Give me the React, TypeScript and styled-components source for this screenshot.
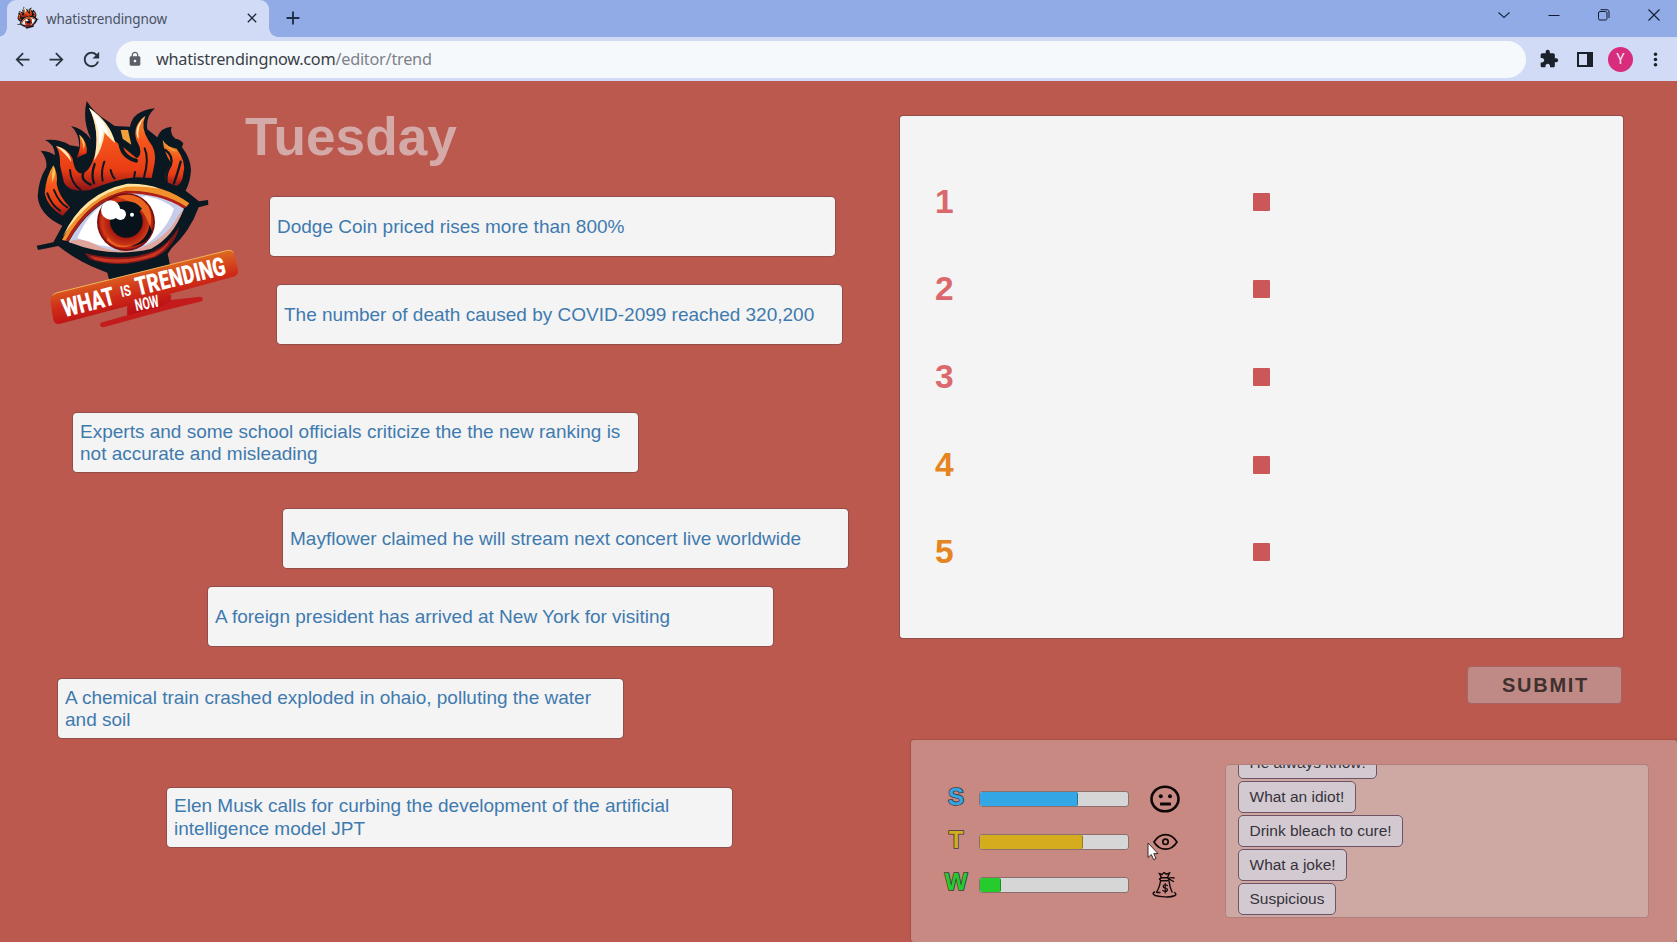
import React from "react";
import styled, { createGlobalStyle } from "styled-components";
import {
  MdAdd,
  MdArrowBack,
  MdArrowForward,
  MdClose,
  MdExtension,
  MdLock,
  MdMoreVert,
  MdRefresh,
} from "react-icons/md";

const GlobalStyle = createGlobalStyle`
  * { box-sizing: border-box; }
  html, body { margin: 0; padding: 0; }
  body {
    width: 1677px;
    height: 942px;
    overflow: hidden;
    font-family: "Liberation Sans", Arial, sans-serif;
  }
`;

const Window = styled.div`
  display: flex;
  flex-direction: column;
  width: 1677px;
  height: 942px;
  overflow: hidden;
  background: #bc594e;
`;

/* ---------- browser chrome ---------- */

const TabStrip = styled.div`
  display: flex;
  flex: none;
  height: 37px;
  padding-left: 7px;
  background: #91abe6;
`;

const Tab = styled.div`
  position: relative;
  display: flex;
  align-items: center;
  width: 262px;
  height: 37px;
  padding: 0 9px 2px 10px;
  border-radius: 9px 9px 0 0;
  background: #d1dbf5;

  &::before,
  &::after {
    content: "";
    position: absolute;
    bottom: 0;
    width: 9px;
    height: 9px;
  }
  &::before {
    left: -9px;
    background: radial-gradient(circle at 0 0, transparent 8.5px, #d1dbf5 9px);
  }
  &::after {
    right: -9px;
    background: radial-gradient(circle at 100% 0, transparent 8.5px, #d1dbf5 9px);
  }
`;

const TabTitle = styled.span`
  flex: 1;
  padding: 3px 0 0 7px;
  color: #4a5263;
  font: 13.5px/20px "Noto Sans", sans-serif;
  letter-spacing: -0.1px;
`;

const NewTab = styled.div`
  display: flex;
  align-items: center;
  padding: 0 0 2px 13px;
  color: #1f2a44;
`;

const WindowControls = styled.div`
  display: flex;
  align-items: center;
  gap: 36px;
  margin-left: auto;
  padding: 0 16px 7px 0;
`;

const Toolbar = styled.div`
  display: flex;
  flex: none;
  align-items: center;
  height: 44px;
  padding-left: 12px;
  background: #d1dbf5;
  color: #2b3340;

  svg {
    flex: none;
  }
`;

const NavButtons = styled.div`
  display: flex;
  align-items: center;
  gap: 13px;
  width: 104px;
`;

const AddressBar = styled.div`
  display: flex;
  align-items: center;
  width: 1410px;
  height: 37px;
  padding-left: 11px;
  border-radius: 19px;
  background: #f6f9fc;
  color: #5b6068;
`;

const Url = styled.span`
  padding-left: 13px;
  color: #3a3f47;
  font: 16.3px/24px "Noto Sans", sans-serif;
  letter-spacing: -0.25px;
`;

const UrlPath = styled.span`
  color: #7d828a;
`;

const ToolbarActions = styled.div`
  display: flex;
  align-items: center;
  margin-left: 13px;
  color: #1b212b;
`;

const SidePanelIcon = styled.div`
  width: 16px;
  height: 15px;
  margin-left: 18px;
  border: 2px solid #1b212b;
  border-right-width: 6px;
`;

const Avatar = styled.div`
  display: grid;
  place-items: center;
  width: 25px;
  height: 25px;
  margin: 0 12px 0 15px;
  border-radius: 50%;
  background: #d72d7c;
  color: #fbe3ee;
  font: 14px/1 Roboto, sans-serif;
  flex: none;
`;

/* ---------- page ---------- */

const Page = styled.main`
  position: relative;
  display: flex;
  flex: 1;
  min-height: 0;
`;

const Feed = styled.section`
  display: flex;
  align-items: flex-start;
  width: 899px;
  padding: 9px 0 0 20px;
`;

const Weekday = styled.h1`
  margin: 16px 0 0 -15px;
  color: #d3aaa8;
  font-size: 53.2px;
  font-weight: 700;
  line-height: 62px;
`;

const Headline = styled.div<{ $x: number; $y: number }>`
  position: absolute;
  left: ${(p) => p.$x}px;
  top: ${(p) => p.$y}px;
  display: flex;
  align-items: center;
  width: 565px;
  height: 59px;
  padding: 1px 10px 0 7px;
  border-radius: 4px;
  background: #f4f4f4;
  box-shadow: 0 0 0 1px rgba(80, 60, 70, 0.4);
  color: #3f7aae;
  font-size: 19px;
  line-height: 22.3px;
`;

const Desk = styled.section`
  display: flex;
  flex-direction: column;
  width: 778px;
  padding-top: 35px;
`;

const RankBoard = styled.ol`
  display: flex;
  flex-direction: column;
  flex: none;
  width: 723px;
  height: 522px;
  margin: 0 0 0 1px;
  padding: 42px 35px 0;
  border-radius: 3px;
  background: #f4f4f4;
  box-shadow: 0 0 0 1px rgba(80, 60, 70, 0.4);
  list-style: none;
`;

const RankRow = styled.li`
  display: flex;
  align-items: center;
  height: 87.6px;
`;

const RankNumber = styled.span<{ $minor: boolean }>`
  width: 318px;
  padding-bottom: 1px;
  color: ${(p) => (p.$minor ? "#e58522" : "#da686c")};
  font-size: 33.5px;
  font-weight: 700;
  line-height: 39px;
`;

const Slot = styled.span`
  width: 17px;
  height: 18px;
  border-radius: 1px;
  background: #cb5759;
`;

const SubmitButton = styled.button`
  flex: none;
  width: 155px;
  height: 38px;
  margin: 28px 0 0 568px;
  padding: 0 0 0 2px;
  border: 1px solid #a66560;
  border-radius: 4px;
  background: #bf8a86;
  color: #40312f;
  font: 700 20px/36px "Liberation Sans", Arial, sans-serif;
  letter-spacing: 1.7px;
`;

const StatusPanel = styled.section`
  display: flex;
  flex: none;
  width: 766px;
  height: 202px;
  margin: 36px 0 0 12px;
  border-radius: 3px;
  background: #c88983;
  box-shadow: 0 0 0 1px rgba(120, 60, 60, 0.35);
`;

const Meters = styled.div`
  display: flex;
  flex-direction: column;
  width: 314px;
  padding: 38px 0 0 30px;
`;

const MeterRow = styled.div`
  display: flex;
  align-items: center;
  height: 42.7px;
`;

const MeterLetter = styled.span<{ $color: string }>`
  width: 30px;
  padding-bottom: 5px;
  color: ${(p) => p.$color};
  font-size: 24px;
  font-weight: 700;
  line-height: 28px;
  text-align: center;
  -webkit-text-stroke: 1.6px #3c3a38;
  paint-order: stroke fill;
`;

const MeterTrack = styled.div`
  width: 150px;
  height: 16px;
  margin: 0 21px 0 8px;
  overflow: hidden;
  border: 1px solid #8b6f6c;
  border-radius: 3px;
  background: #d6d6d6;
`;

const MeterFill = styled.div<{ $color: string; $width: number }>`
  width: ${(p) => p.$width}px;
  height: 14px;
  border-right: 1px solid rgba(0, 0, 0, 0.3);
  border-radius: 2px;
  background: ${(p) => p.$color};
`;

const Comments = styled.div`
  display: flex;
  flex-direction: column;
  align-items: flex-start;
  justify-content: flex-end;
  gap: 2px;
  width: 424px;
  height: 154px;
  margin-top: 24px;
  padding: 0 0 2px 12px;
  overflow: hidden;
  border: 1px solid #b08080;
  border-radius: 4px;
  background: #cea8a2;
`;

const Bubble = styled.div`
  flex: none;
  height: 32px;
  padding: 0 10.5px;
  border: 1px solid #6d5364;
  border-radius: 5px;
  background: #d2cad0;
  color: #37323c;
  font-size: 15.5px;
  line-height: 30px;
  white-space: nowrap;
`;

const Pointer = styled.svg`
  position: absolute;
  left: 1147px;
  top: 761px;
`;

/* ---------- drawings ---------- */

function FlamingEye({ id }: { id: string }) {
  return (
    <g>
      <defs>
        <linearGradient id={`${id}-fire`} x1="0" y1="0" x2="0" y2="1">
          <stop offset="0" stopColor="#f79a2c" />
          <stop offset="0.4" stopColor="#f4551c" />
          <stop offset="0.75" stopColor="#e93c14" />
          <stop offset="1" stopColor="#8c1418" />
        </linearGradient>
        <radialGradient id={`${id}-iris`} cx="0.5" cy="0.5" r="0.5">
          <stop offset="0" stopColor="#8c1210" />
          <stop offset="0.6" stopColor="#a81a10" />
          <stop offset="0.88" stopColor="#d03a16" />
          <stop offset="1" stopColor="#a81810" />
        </radialGradient>
      </defs>
      <path
        fill="#0a1822"
        d="M200 33 Q225 72 262 92 L284 108 L330 110 Q338 62 405 55 Q376 80 382 118 L412 142 Q422 112 455 110 Q448 130 466 146 Q482 148 490 160 L486 172 Q512 205 513 240 Q511 275 497 302 L537 334 L564 330 L565 344 L536 352 Q510 425 455 474 L443 492 L450 525 L268 572 L262 548 L236 538 Q170 512 115 468 L54 480 L50 467 L100 457 L127 407 Q58 375 53 320 Q55 270 79 232 Q82 205 62 182 Q92 184 105 196 Q104 162 75 150 Q120 146 150 166 L178 170 Q178 130 153 108 Q190 115 213 148 Q186 92 200 33Z"
      />
      <g fill={`url(#${id}-fire)`}>
        <path d="M208 54 Q256 96 280 150 Q320 178 350 205 Q372 190 350 152 Q335 108 376 78 Q360 112 386 152 Q410 180 404 218 L395 264 L350 262 Q290 266 210 300 Q150 310 132 278 L120 225 Q122 190 108 168 Q145 176 158 206 Q164 250 185 250 Q210 248 226 190 Q240 130 208 54Z" />
        <path d="M100 226 Q114 250 110 282 Q116 318 150 352 L128 378 Q82 350 74 310 Q78 260 100 226Z" />
        <path d="M428 150 Q440 172 470 176 Q500 215 490 250 Q488 280 470 288 L438 276 Q430 250 454 220 Q432 190 428 150Z" />
        <path d="M178 134 Q205 158 200 190 L170 204 Q186 170 178 134Z" />
        <path fill="#f0a13a" d="M302 120 H324 L334 164 L308 146Z" />
      </g>
      <g fill="#ffe9b8">
        <path d="M207 53 Q272 98 286 160 Q262 138 254 128 Q248 175 222 212 Q242 120 207 53Z" />
        <path d="M376 77 Q350 108 356 148 Q336 116 376 77Z" />
        <path d="M108 168 Q148 178 154 216 Q136 190 108 168Z" />
        <path fill="#f7c560" d="M178 134 Q202 154 190 178 Q190 156 178 134Z" />
        <path fill="#f9c052" d="M430 152 Q444 176 472 184 Q450 186 430 152Z" />
        <path fill="#f9c052" d="M101 228 Q112 250 96 276 Q94 250 101 228Z" />
      </g>
      <path fill="#ffffff" d="M208 55 Q258 96 268 140 L250 120 Q246 150 238 166 Q242 110 208 55Z" />
      <g fill="none" stroke="#0a1822" strokeLinecap="round">
        <path strokeWidth="6" d="M253 215 Q242 245 248 272 M272 240 Q276 258 284 266 M374 175 Q388 206 372 262 M345 246 L342 264" />
        <path strokeWidth="6" d="M150 240 Q152 278 182 300 M102 300 Q118 340 142 352 M82 310 Q94 345 120 362" />
        <path strokeWidth="7" d="M436 180 Q462 198 452 226 Q436 250 440 276 M482 215 Q474 246 462 280" />
        <path strokeWidth="12" d="M300 150 Q302 200 348 212" />
        <path strokeWidth="7" d="M190 248 Q180 270 212 284 M224 222 Q212 256 222 280" />
      </g>

      <path fill="#0a1822" d="M108 460 Q190 290 330 268 Q450 272 536 340 Q480 460 400 492 Q250 530 108 460Z" />
      <path fill="#f0912c" d="M126 450 Q190 312 322 282 Q430 282 508 340 L498 352 Q410 300 320 304 Q210 320 138 452Z" />
      <path fill="#ffe3a0" d="M128 440 Q188 308 322 281 Q380 280 420 296 Q370 288 320 290 Q210 312 128 440Z" />
      <path fill="#b02018" d="M136 452 Q206 326 316 302 Q420 300 500 350 L490 356 Q410 312 316 312 Q214 332 146 454Z" />
      <path fill="#c6cdea" d="M146 456 Q210 340 316 310 Q420 310 492 356 Q456 440 392 474 Q290 500 146 456Z" />
      <path fill="#ffffff" d="M172 444 Q206 366 262 336 L380 318 Q440 332 462 356 Q440 420 380 462 Q270 488 172 444Z" />
      <path fill="#e0a59c" d="M146 456 Q180 436 238 470 Q280 486 340 482 Q440 450 474 378 L490 358 Q462 440 394 476 Q270 506 146 456Z" />
      <circle cx="318" cy="396" r="87" fill="#7a1010" />
      <circle cx="318" cy="396" r="82" fill={`url(#${id}-iris)`} />
      <path fill="#e8641f" d="M290 320 Q350 300 386 350 Q398 380 390 410 Q370 340 290 320Z" />
      <path fill="#e8641f" d="M262 440 Q290 476 336 464 Q300 484 262 452Z" />
      <circle cx="319" cy="394" r="49" fill="#07121a" />
      <path fill="#07121a" d="M284 340 Q340 322 366 356 L350 372 L290 360Z M330 470 Q384 452 388 404 L396 424 Q384 464 330 470Z" />
      <circle cx="272" cy="360" r="29" fill="#ffffff" />
      <circle cx="301" cy="373" r="17" fill="#ffffff" />
      <circle cx="336" cy="374" r="6" fill="#ffffff" />
      <path fill="#7f171b" d="M194 490 Q320 516 400 484 Q444 464 478 410 Q464 470 410 500 Q300 540 210 508Z" />
      <path fill="#cb3620" d="M208 497 Q320 522 398 490 Q430 478 452 448 Q436 484 400 500 Q300 530 226 510Z" />
    </g>
  );
}

function BrandLogo() {
  return (
    <svg width="240" height="250" viewBox="0 0 720 750" role="img" aria-label="What is trending now">
      <defs>
        <linearGradient id="banner" gradientUnits="userSpaceOnUse" x1="360" y1="540" x2="385" y2="665">
          <stop offset="0" stopColor="#dd6420" />
          <stop offset="0.5" stopColor="#cf2c18" />
          <stop offset="1" stopColor="#ba0c14" />
        </linearGradient>
      </defs>
      <FlamingEye id="brand" />
      <path fill="#c41c1c" d="M322 650 L455 615 L452 630 L540 620 Q555 624 545 634 L440 660 L250 712 Q236 710 242 698 L322 676Z" />
      <path
        fill="url(#banner)"
        d="M110 608 L620 482 Q638 476 642 492 L654 540 Q656 556 640 560 L450 612 L452 632 L420 652 L322 676 L322 648 L118 702 Q104 704 100 690 L91 634 Q90 614 110 608Z"
      />
      <path fill="none" stroke="#f1b35a" strokeWidth="3" d="M98 616 Q102 610 112 608 L620 482 Q634 478 640 488" />
      <g fill="#ffffff" fontFamily="Roboto, sans-serif" fontWeight="900">
        <text transform="translate(134 682) rotate(-14.5)" fontSize="77" textLength="160" lengthAdjust="spacingAndGlyphs">WHAT</text>
        <text transform="translate(305 622) rotate(-13)" fontSize="46" fontWeight="700" textLength="31" lengthAdjust="spacingAndGlyphs">IS</text>
        <text transform="translate(353 617) rotate(-13.5)" fontSize="77" textLength="276" lengthAdjust="spacingAndGlyphs">TRENDING</text>
        <text transform="translate(349 664) rotate(-12)" fontSize="50" fontWeight="700" textLength="72" lengthAdjust="spacingAndGlyphs">NOW</text>
      </g>
    </svg>
  );
}

function Favicon() {
  return (
    <svg width="22" height="23" viewBox="40 25 535 550" aria-hidden="true">
      <FlamingEye id="tab" />
    </svg>
  );
}

function FaceIcon() {
  return (
    <svg width="30" height="28" viewBox="0 0 30 28">
      <ellipse cx="15" cy="14" rx="13.5" ry="12.3" fill="none" stroke="#0d0707" strokeWidth="2.6" />
      <circle cx="10.8" cy="11.3" r="2" fill="#0d0707" />
      <circle cx="20" cy="11.3" r="2" fill="#0d0707" />
      <rect x="10" y="17.6" width="11" height="2.8" rx="0.6" fill="#0d0707" />
    </svg>
  );
}

function EyeIcon() {
  return (
    <svg width="30" height="28" viewBox="0 0 30 28" fill="none" stroke="#120808">
      <path strokeWidth="1.7" d="M4 14 Q8.5 6.6 15.5 6.6 Q22.5 6.6 27 14 Q22.5 21.2 15.5 21.2 Q8.5 21.2 4 14Z" />
      <circle cx="15.5" cy="13.8" r="2.7" strokeWidth="1.7" />
    </svg>
  );
}

function MoneyBagIcon() {
  return (
    <svg width="30" height="28" viewBox="0 0 30 28" fill="none" stroke="#120808" strokeWidth="1.4" strokeLinecap="round">
      <path d="M9.5 2.6 L12 3.4 L14 1.6 L16.5 3.2 L19.5 2 L17.5 6.5 L19.5 8.5 L17 9.8 H11 L9.5 8 L11.5 6.5Z" />
      <path d="M11 6.8 H18 M18.5 7.5 Q21 6 24 7 M20 8.5 L23.5 10.5" />
      <path d="M10.5 10 Q9.5 17 6.5 21 M19 10 Q20 17 22 21 M7 21.5 H10" />
      <path d="M4.5 21 Q1.5 22.5 5 24.5 Q9 25.5 12 25.6 Q20 26.8 25 24.5 Q27 23 24.5 21.5" />
      <path strokeWidth="1.2" d="M17.5 14.6 Q14.5 12.8 13.3 14.8 Q13 16.6 15.2 17 Q18 17.5 17.3 19.5 Q15.5 21.5 12.8 19.5 M15.2 12.5 V22" />
    </svg>
  );
}

/* ---------- content ---------- */

const headlines = [
  { x: 270, y: 116, text: "Dodge Coin priced rises more than 800%" },
  { x: 277, y: 204, text: "The number of death caused by COVID-2099 reached 320,200" },
  { x: 73, y: 332, text: "Experts and some school officials criticize the the new ranking is not accurate and misleading" },
  { x: 283, y: 428, text: "Mayflower claimed he will stream next concert live worldwide" },
  { x: 208, y: 506, text: "A foreign president has arrived at New York for visiting" },
  { x: 58, y: 598, text: "A chemical train crashed exploded in ohaio, polluting the water and soil" },
  { x: 167, y: 706.5, text: "Elen Musk calls for curbing the development of the artificial intelligence model JPT" },
];

const meters = [
  { letter: "S", color: "#33a6e6", width: 98, icon: <FaceIcon /> },
  { letter: "T", color: "#d5ac1e", width: 103, icon: <EyeIcon /> },
  { letter: "W", color: "#25cc2b", width: 21, icon: <MoneyBagIcon /> },
];

const comments = ["He always know!", "What an idiot!", "Drink bleach to cure!", "What a joke!", "Suspicious"];

export default function App() {
  return (
    <>
      <GlobalStyle />
      <Window>
        <TabStrip>
          <Tab>
            <Favicon />
            <TabTitle>whatistrendingnow</TabTitle>
            <MdClose size={16} color="#1f2a3c" />
          </Tab>
          <NewTab>
            <MdAdd size={22} />
          </NewTab>
          <WindowControls>
            <svg width="14" height="14" viewBox="0 0 14 14" fill="none" stroke="#1d2945" strokeWidth="1.1">
              <path d="M1.5 4.500 L7 9.500 L12.500 4.500" />
            </svg>
            <svg width="14" height="14" viewBox="0 0 14 14" stroke="#101a33" strokeWidth="1">
              <path d="M1.500 7.500 H12.500" />
            </svg>
            <svg width="14" height="14" viewBox="0 0 14 14" fill="none" stroke="#101a33" strokeWidth="1">
              <rect x="1.500" y="3.500" width="8.500" height="8.500" rx="1.500" />
              <path d="M3.500 1.700 H10 Q12 1.800 12 3.800 V10" />
            </svg>
            <svg width="14" height="14" viewBox="0 0 14 14" stroke="#101a33" strokeWidth="1.100">
              <path d="M1.500 1.500 L12.500 12.500 M12.500 1.500 L1.500 12.500" />
            </svg>
          </WindowControls>
        </TabStrip>
        <Toolbar>
          <NavButtons>
            <MdArrowBack size={21} />
            <MdArrowForward size={21} />
            <MdRefresh size={23} />
          </NavButtons>
          <AddressBar>
            <MdLock size={16} />
            <Url>
              whatistrendingnow.com<UrlPath>/editor/trend</UrlPath>
            </Url>
          </AddressBar>
          <ToolbarActions>
            <MdExtension size={20} />
            <SidePanelIcon />
            <Avatar>Y</Avatar>
            <MdMoreVert size={21} />
          </ToolbarActions>
        </Toolbar>
        <Page>
          <Feed>
            <BrandLogo />
            <Weekday>Tuesday</Weekday>
            {headlines.map((h) => (
              <Headline key={h.text} $x={h.x} $y={h.y}>
                {h.text}
              </Headline>
            ))}
          </Feed>
          <Desk>
            <RankBoard>
              {[1, 2, 3, 4, 5].map((n) => (
                <RankRow key={n}>
                  <RankNumber $minor={n > 3}>{n}</RankNumber>
                  <Slot />
                </RankRow>
              ))}
            </RankBoard>
            <SubmitButton>SUBMIT</SubmitButton>
            <StatusPanel>
              <Meters>
                {meters.map((m) => (
                  <MeterRow key={m.letter}>
                    <MeterLetter $color={m.color}>{m.letter}</MeterLetter>
                    <MeterTrack>
                      <MeterFill $color={m.color} $width={m.width} />
                    </MeterTrack>
                    {m.icon}
                  </MeterRow>
                ))}
              </Meters>
              <Comments>
                {comments.map((c) => (
                  <Bubble key={c}>{c}</Bubble>
                ))}
              </Comments>
            </StatusPanel>
          </Desk>
          <Pointer width="12" height="20" viewBox="0 0 12 20">
            <path
              d="M1 1 V15.5 L4.3 12.5 L6.6 17.6 L9 16.5 L6.8 11.6 H11Z"
              fill="#ffffff"
              stroke="#2b1a1a"
              strokeWidth="0.9"
            />
          </Pointer>
        </Page>
      </Window>
    </>
  );
}
